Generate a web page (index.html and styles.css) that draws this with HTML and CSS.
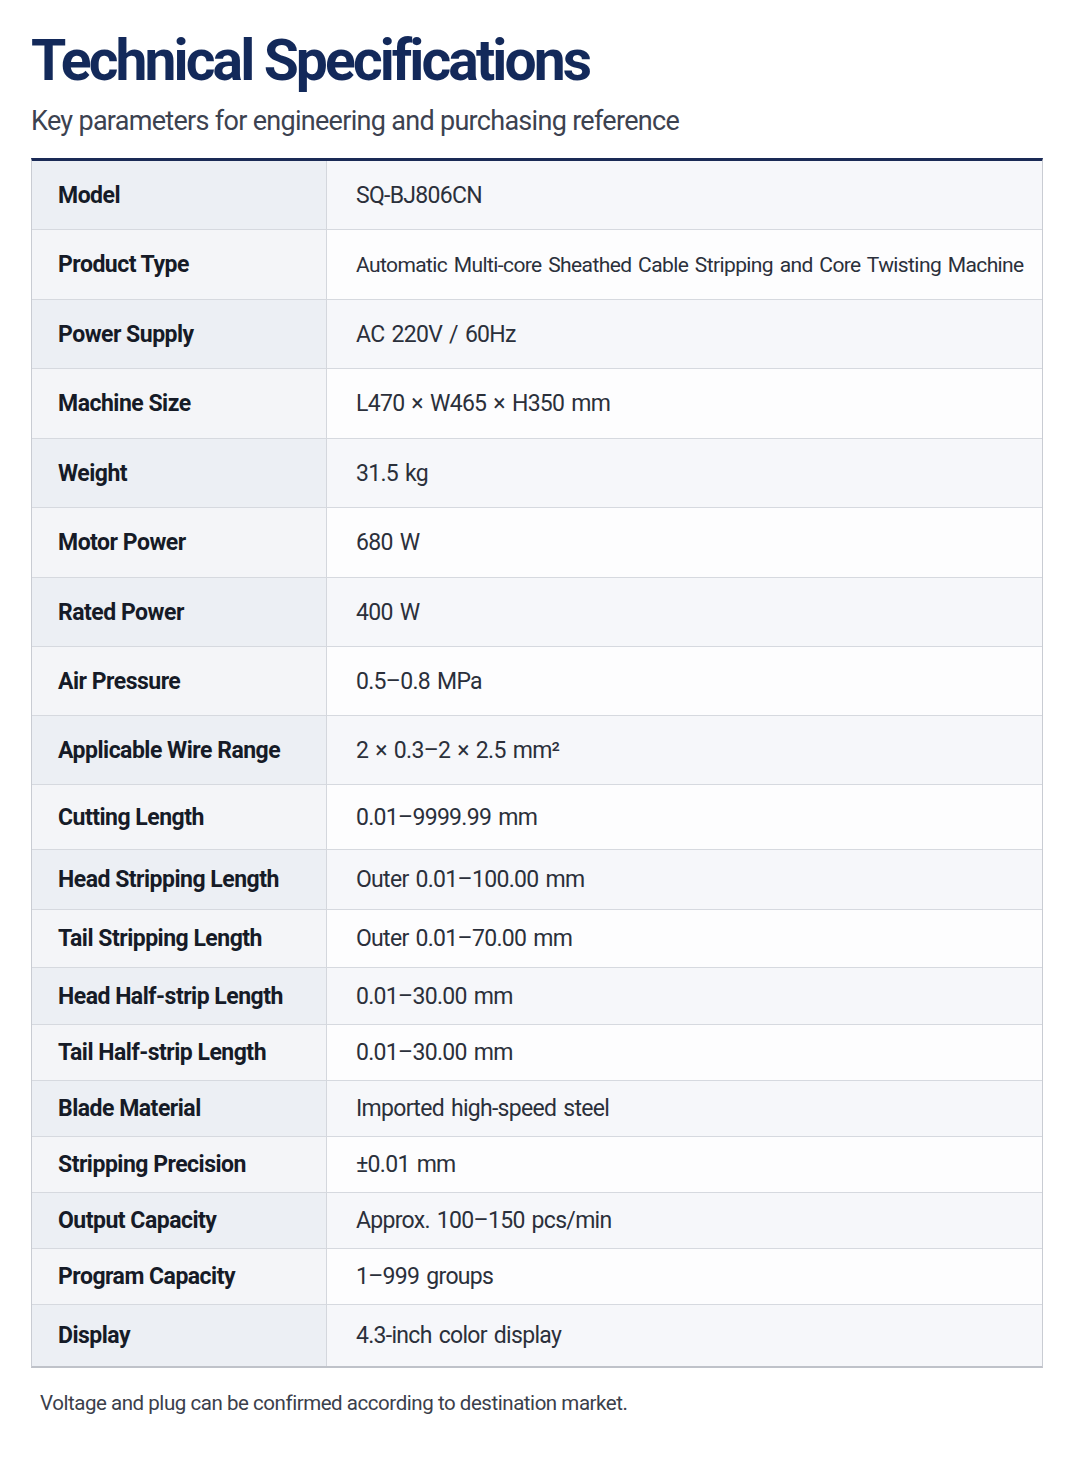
FILE: index.html
```html
<!DOCTYPE html>
<html lang="en">
<head>
  <meta charset="UTF-8" />
  <meta name="viewport" content="width=device-width, initial-scale=1.0"/>
  <title>Technical Specifications</title>
  <link rel="stylesheet" href="styles.css">
</head>
<body>

<div class="page">
  <h1 class="title">Technical Specifications</h1>
  <p class="subtitle">Key parameters for engineering and purchasing reference</p>

  <div class="spec-table">
    <div class="row"><div class="label">Model</div><div class="value">SQ-BJ806CN</div></div>
    <div class="row"><div class="label">Product Type</div><div class="value value-long">Automatic Multi-core Sheathed Cable Stripping and Core Twisting Machine</div></div>
    <div class="row"><div class="label">Power Supply</div><div class="value">AC 220V / 60Hz</div></div>
    <div class="row"><div class="label">Machine Size</div><div class="value">L470 × W465 × H350 mm</div></div>
    <div class="row"><div class="label">Weight</div><div class="value">31.5 kg</div></div>
    <div class="row"><div class="label">Motor Power</div><div class="value">680 W</div></div>
    <div class="row"><div class="label">Rated Power</div><div class="value">400 W</div></div>
    <div class="row"><div class="label">Air Pressure</div><div class="value">0.5–0.8 MPa</div></div>
    <div class="row"><div class="label">Applicable Wire Range</div><div class="value">2 × 0.3–2 × 2.5 mm²</div></div>
    <div class="row"><div class="label">Cutting Length</div><div class="value">0.01–9999.99 mm</div></div>
    <div class="row"><div class="label">Head Stripping Length</div><div class="value">Outer 0.01–100.00 mm</div></div>
    <div class="row"><div class="label">Tail Stripping Length</div><div class="value">Outer 0.01–70.00 mm</div></div>
    <div class="row"><div class="label">Head Half-strip Length</div><div class="value">0.01–30.00 mm</div></div>
    <div class="row"><div class="label">Tail Half-strip Length</div><div class="value">0.01–30.00 mm</div></div>
    <div class="row"><div class="label">Blade Material</div><div class="value">Imported high-speed steel</div></div>
    <div class="row"><div class="label">Stripping Precision</div><div class="value">±0.01 mm</div></div>
    <div class="row"><div class="label">Output Capacity</div><div class="value">Approx. 100–150 pcs/min</div></div>
    <div class="row"><div class="label">Program Capacity</div><div class="value">1–999 groups</div></div>
    <div class="row"><div class="label">Display</div><div class="value">4.3-inch color display</div></div>
  </div>

  <p class="note">Voltage and plug can be confirmed according to destination market.</p>
</div>

</body>
</html>
```

FILE: styles.css
```css
body {
  margin: 0;
  background-color: #ffffff;
  font-family: Roboto, "Noto Sans", Arial, sans-serif;
}
.page {
  padding: 32px 32px 40px 31px;
}
.title {
  margin: 0;
  font-size: 57px;
  line-height: 58px;
  font-weight: 700;
  letter-spacing: -2.9px;
  color: #13295a;
}
.subtitle {
  margin: 17px 0 0 0;
  font-size: 27px;
  line-height: 28px;
  letter-spacing: -0.7px;
  color: #3c4250;
}
.spec-table {
  margin-top: 23px;
  width: 1012px;
  box-sizing: border-box;
  display: grid;
  grid-template-columns: 295px 1fr;
  grid-template-rows: 69px 70px 69px 70px 69px 70px 69px 69px 69px 65px 60px 58px 57px 56px 56px 56px 56px 56px 61px;
  border-top: 3px solid #1a2a56;
  border-left: 1px solid #c9ccd3;
  border-right: 1px solid #c9ccd3;
  border-bottom: 2px solid #bfc2c9;
}
.row { display: contents; }
.label, .value {
  display: flex;
  align-items: center;
  border-bottom: 1px solid #d6d9df;
}
.row:last-child .label,
.row:last-child .value { border-bottom: none; }
.label {
  padding-left: 26px;
  border-right: 1px solid #d4d7dd;
  font-size: 23px;
  font-weight: 700;
  letter-spacing: -0.5px;
  color: #161b27;
  background-color: #f4f5f8;
}
.value {
  padding-left: 29px;
  font-size: 23px;
  letter-spacing: -0.7px;
  word-spacing: 2px;
  color: #2b303b;
  background-color: #fdfdfe;
}
.value-long {
  font-size: 21px;
  letter-spacing: -0.6px;
}
.row:nth-child(odd) .label { background-color: #eceff4; }
.row:nth-child(odd) .value { background-color: #f6f7fa; }
.note {
  margin: 25px 0 0 9px;
  font-size: 20.5px;
  line-height: 21px;
  letter-spacing: -0.45px;
  color: #3b404b;
}
```
